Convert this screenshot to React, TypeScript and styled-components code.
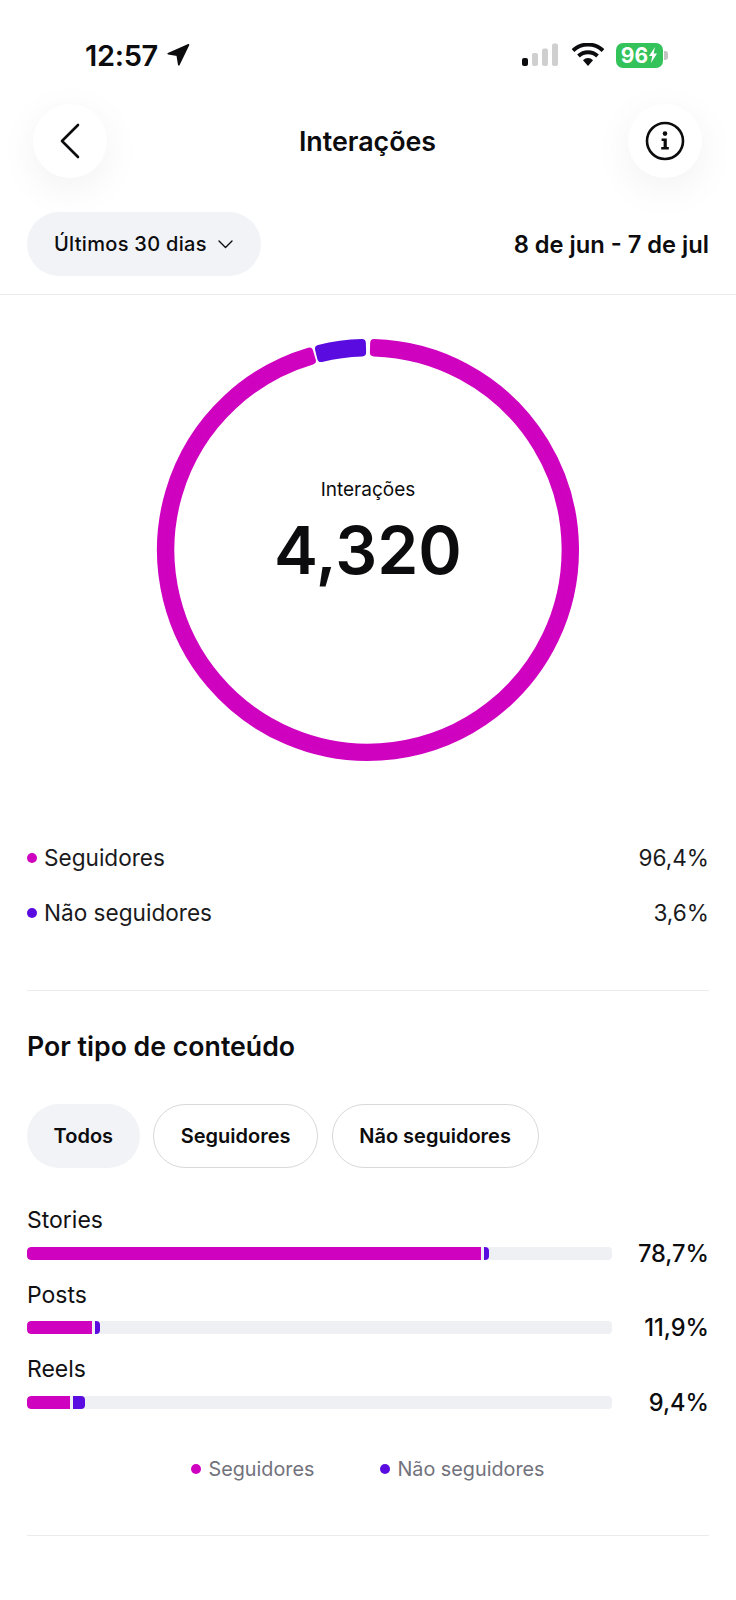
import React from "react";
import styled, { createGlobalStyle } from "styled-components";

const MAGENTA = "#cf02c0";
const PURPLE = "#5a0ce0";

const GlobalStyle = createGlobalStyle`
  html, body {
    margin: 0;
    padding: 0;
    background: #ffffff;
  }
  body {
    font-family: "Inter", "Liberation Sans", sans-serif;
    color: #0c0c0e;
  }
`;

const bars = [
  { label: "Stories", followers: 454, others: 4.5, value: "78,7%" },
  { label: "Posts", followers: 65, others: 4.5, value: "11,9%" },
  { label: "Reels", followers: 43, others: 12, value: "9,4%" },
];

// annular segment, inset so the stroke of the same colour rounds its corners
const segment = (from: number, to: number) => {
  const cx = 212;
  const cy = 212;
  const outer = 207;
  const inner = 197.6;
  const pt = (r: number, deg: number) => {
    const a = (deg * Math.PI) / 180;
    return `${(cx + r * Math.sin(a)).toFixed(2)} ${(cy - r * Math.cos(a)).toFixed(2)}`;
  };
  const large = to - from > 180 ? 1 : 0;
  return `M${pt(outer, from)} A${outer} ${outer} 0 ${large} 1 ${pt(outer, to)} L${pt(inner, to)} A${inner} ${inner} 0 ${large} 0 ${pt(inner, from)} Z`;
};

const App = () => (
  <Page>
    <GlobalStyle />
    <StatusBar>
      <Clock>
        12:57
        <svg width="24" height="24" viewBox="0 0 24 24">
          <path d="M22.5 1.8 2.2 10.8l9 1.4 1.6 9.6z" fill="#0c0c0e" stroke="#0c0c0e" strokeWidth="1.6" strokeLinejoin="round" />
        </svg>
      </Clock>
      <StatusIcons>
        <svg width="38" height="24" viewBox="0 0 38 24">
          <rect x="0" y="15" width="6" height="8" rx="2" fill="#0c0c0e" />
          <rect x="10" y="10" width="6" height="13" rx="2" fill="#cfcfcf" />
          <rect x="20" y="5.5" width="6" height="17.5" rx="2" fill="#cfcfcf" />
          <rect x="30" y="0.5" width="6" height="22.5" rx="2" fill="#cfcfcf" />
        </svg>
        <svg width="32" height="24" viewBox="0 0 32 24">
          <path d="M1 7.5a22 22 0 0 1 30 0" fill="none" stroke="#0c0c0e" strokeWidth="4" />
          <path d="M6.5 13a14 14 0 0 1 19 0" fill="none" stroke="#0c0c0e" strokeWidth="4" />
          <path d="M11 17.2a7 7 0 0 1 10 0L16 23z" fill="#0c0c0e" />
        </svg>
        <Battery>
          <BatteryBody>
            96
            <svg width="10" height="18" viewBox="0 0 10 18">
              <path d="M7 1 1 10h3.2L3 17l6-9.5H5.6z" fill="#ffffff" />
            </svg>
          </BatteryBody>
          <BatteryCap />
        </Battery>
      </StatusIcons>
    </StatusBar>

    <NavBar>
      <RoundButton>
        <svg width="24" height="38" viewBox="0 0 24 38">
          <path d="M20 3 4 19l16 16" fill="none" stroke="#0c0c0e" strokeWidth="2.6" strokeLinecap="round" strokeLinejoin="round" />
        </svg>
      </RoundButton>
      <NavTitle>Interações</NavTitle>
      <RoundButton>
        <svg width="40" height="40" viewBox="0 0 40 40">
          <circle cx="20" cy="20" r="18" fill="none" stroke="#0c0c0e" strokeWidth="2.6" />
          <circle cx="20" cy="12.6" r="2.3" fill="#0c0c0e" />
          <path d="M16.6 17.6h5.2v8.4h2v2.4H16.2V26h2.4v-6h-2z" fill="#0c0c0e" />
        </svg>
      </RoundButton>
    </NavBar>

    <RangeRow>
      <RangePill>
        Últimos 30 dias
        <svg width="15" height="9" viewBox="0 0 15 9">
          <path d="M1 1l6.5 6.5L14 1" fill="none" stroke="#0c0c0e" strokeWidth="1.4" strokeLinecap="round" strokeLinejoin="round" />
        </svg>
      </RangePill>
      <DateRange>8 de jun - 7 de jul</DateRange>
    </RangeRow>

    <RingSection>
      <RingBox>
        <svg width="424" height="424" viewBox="0 0 424 424">
          <path d={segment(1.7, 343.5)} fill={MAGENTA} stroke={MAGENTA} strokeWidth="8" strokeLinejoin="round" />
          <path d={segment(346.3, 358.3)} fill={PURPLE} stroke={PURPLE} strokeWidth="8" strokeLinejoin="round" />
        </svg>
        <RingCenter>
          <RingLabel>Interações</RingLabel>
          <RingValue>4,320</RingValue>
        </RingCenter>
      </RingBox>
    </RingSection>

    <LegendList>
      <LegendRow>
        <LegendName>
          <Dot $color={MAGENTA} />
          Seguidores
        </LegendName>
        <span>96,4%</span>
      </LegendRow>
      <LegendRow>
        <LegendName>
          <Dot $color={PURPLE} />
          Não seguidores
        </LegendName>
        <span>3,6%</span>
      </LegendRow>
    </LegendList>

    <ContentSection>
      <Heading>Por tipo de conteúdo</Heading>
      <Chips>
        <Chip $active>Todos</Chip>
        <Chip>Seguidores</Chip>
        <Chip>Não seguidores</Chip>
      </Chips>
      <BarList>
        {bars.map((bar) => (
          <BarItem key={bar.label}>
            <BarLabel>{bar.label}</BarLabel>
            <BarRow>
              <Track>
                <BarFill $width={bar.followers} $color={MAGENTA} $first />
                <BarFill $width={bar.others} $color={PURPLE} />
              </Track>
              <BarValue>{bar.value}</BarValue>
            </BarRow>
          </BarItem>
        ))}
      </BarList>
      <BottomLegend>
        <BottomLegendItem>
          <Dot $color={MAGENTA} />
          Seguidores
        </BottomLegendItem>
        <BottomLegendItem>
          <Dot $color={PURPLE} />
          Não seguidores
        </BottomLegendItem>
      </BottomLegend>
    </ContentSection>
  </Page>
);

export default App;

const Page = styled.div`
  width: 736px;
  height: 1600px;
  overflow: hidden;
  background: #ffffff;
`;

const StatusBar = styled.div`
  display: flex;
  justify-content: space-between;
  align-items: center;
  height: 44px;
  padding: 33px 68px 0 85px;
`;

const Clock = styled.div`
  display: flex;
  align-items: center;
  gap: 8px;
  font-size: 29px;
  font-weight: 600;
  letter-spacing: -0.3px;
`;

const StatusIcons = styled.div`
  display: flex;
  align-items: center;
  gap: 12px;
`;

const Battery = styled.div`
  display: flex;
  align-items: center;
  gap: 1px;
`;

const BatteryBody = styled.div`
  display: flex;
  align-items: center;
  justify-content: center;
  width: 47px;
  height: 25px;
  border-radius: 7px;
  background: #34c25a;
  color: #ffffff;
  font-size: 21px;
  font-weight: 700;
`;

const BatteryCap = styled.div`
  width: 4px;
  height: 9px;
  border-radius: 0 3px 3px 0;
  background: #c4c4c4;
`;

const NavBar = styled.div`
  display: flex;
  justify-content: space-between;
  align-items: center;
  padding: 27px 34px 0 33px;
`;

const RoundButton = styled.div`
  display: flex;
  align-items: center;
  justify-content: center;
  width: 74px;
  height: 74px;
  border-radius: 50%;
  background: #ffffff;
  box-shadow: 0 10px 40px rgba(0, 0, 0, 0.06);
`;

const NavTitle = styled.div`
  font-size: 26.8px;
  font-weight: 600;
`;

const RangeRow = styled.div`
  display: flex;
  justify-content: space-between;
  align-items: center;
  margin-top: 34px;
  padding: 0 27px 18px;
  border-bottom: 1px solid #ececee;
`;

const RangePill = styled.div`
  display: flex;
  align-items: center;
  gap: 11px;
  height: 64px;
  width: 234px;
  box-sizing: border-box;
  padding-left: 27px;
  border-radius: 32px;
  background: #f1f3f6;
  font-size: 20px;
  font-weight: 500;
  letter-spacing: 0.3px;
`;

const DateRange = styled.div`
  font-size: 23.7px;
  font-weight: 600;
`;

const RingSection = styled.div`
  display: flex;
  justify-content: center;
  padding-top: 43px;
`;

const RingBox = styled.div`
  position: relative;
  width: 424px;
  height: 424px;
`;

const RingCenter = styled.div`
  position: absolute;
  inset: 0;
  display: flex;
  flex-direction: column;
  align-items: center;
  justify-content: center;
  padding-bottom: 34px;
  box-sizing: border-box;
`;

const RingLabel = styled.div`
  font-size: 19px;
  line-height: 24px;
  margin-bottom: 10px;
`;

const RingValue = styled.div`
  font-size: 66px;
  font-weight: 600;
  line-height: 76px;
`;

const LegendList = styled.div`
  display: flex;
  flex-direction: column;
  gap: 26px;
  margin: 0 27px;
  padding: 81px 0 63px;
  border-bottom: 1px solid #ececee;
`;

const LegendRow = styled.div`
  display: flex;
  justify-content: space-between;
  align-items: center;
  height: 29px;
  font-size: 22.6px;
  color: #1a1a1c;
`;

const LegendName = styled.div`
  display: flex;
  align-items: center;
  gap: 7px;
`;

const Dot = styled.span<{ $color: string }>`
  width: 10px;
  height: 10px;
  border-radius: 50%;
  background: ${(p) => p.$color};
`;

const ContentSection = styled.div`
  margin: 0 27px;
  padding: 39px 0 54px;
  border-bottom: 1px solid #ececee;
`;

const Heading = styled.div`
  font-size: 26.7px;
  line-height: 32px;
  font-weight: 600;
`;

const Chips = styled.div`
  display: flex;
  gap: 13.5px;
  margin-top: 42px;
`;

const Chip = styled.div<{ $active?: boolean }>`
  display: flex;
  align-items: center;
  height: 64px;
  box-sizing: border-box;
  padding: 0 26.6px;
  border-radius: 32px;
  font-size: 20px;
  font-weight: 600;
  background: ${(p) => (p.$active ? "#f1f3f6" : "#ffffff")};
  border: ${(p) => (p.$active ? "none" : "1.5px solid #d9d9dc")};
`;

const BarList = styled.div`
  display: flex;
  flex-direction: column;
  gap: 8.5px;
  margin-top: 38px;
`;

const BarItem = styled.div`
  display: flex;
  flex-direction: column;
`;

const BarLabel = styled.div`
  font-size: 23px;
  line-height: 28px;
  height: 28px;
  color: #111113;
`;

const BarRow = styled.div`
  display: flex;
  align-items: center;
  justify-content: space-between;
  height: 38px;
`;

const Track = styled.div`
  display: flex;
  gap: 3px;
  width: 585px;
  height: 13px;
  border-radius: 4px;
  background: #eff0f4;
  overflow: hidden;
`;

const BarFill = styled.div<{ $width: number; $color: string; $first?: boolean }>`
  width: ${(p) => p.$width}px;
  height: 100%;
  background: ${(p) => p.$color};
  border-radius: ${(p) => (p.$first ? "4px 0 0 4px" : "0 4px 4px 0")};
`;

const BarValue = styled.div`
  font-size: 23.6px;
  font-weight: 500;
`;

const BottomLegend = styled.div`
  display: flex;
  justify-content: center;
  gap: 66px;
  margin-top: 36px;
`;

const BottomLegendItem = styled.div`
  display: flex;
  align-items: center;
  gap: 7px;
  font-size: 19.8px;
  color: #72727c;
`;
